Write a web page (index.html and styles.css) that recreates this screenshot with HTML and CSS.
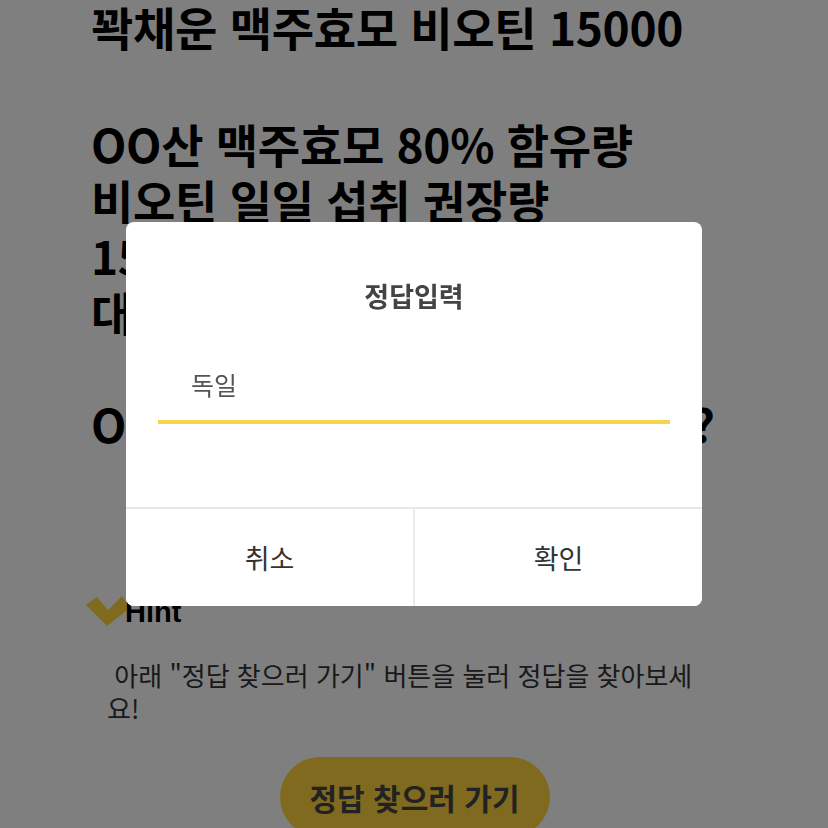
FILE: index.html
```html
<!DOCTYPE html>
<html lang="ko">
<head>
    <meta charset="UTF-8">
    <meta name="viewport" content="width=device-width, initial-scale=1.0">
    <title>퀴즈</title>
    <link rel="stylesheet" href="styles.css">
</head>
<body>
    <div class="page">
        <h1 class="question">꽉채운 맥주효모 비오틴 15000</h1>
        <p class="question detail">OO산 맥주효모 80% 함유량<br>비오틴 일일 섭취 권장량<br>15000% 함유<br>대용량 6개월분<br><br><span class="ask">OO에 들어갈 나라는 어디일까요?</span></p>

        <div class="hint">
            <svg class="hint-check" width="46" height="34" viewBox="0 0 46 34">
                <path d="M1 12 L12 4 L23 17 L37 3 L45 15 L22 33 Z" fill="#fed43e"/>
            </svg>
            <span class="hint-title">Hint</span>
        </div>
        <p class="hint-text">&nbsp;아래 "정답 찾으러 가기" 버튼을 눌러 정답을 찾아보세요!</p>

        <div class="go-wrap">
            <button class="go-btn">정답 찾으러 가기</button>
        </div>
    </div>

    <div class="overlay">
        <div class="dialog">
            <div class="dialog-body">
                <div class="dialog-title">정답입력</div>
                <div class="answer-field">
                    <input class="answer-input" type="text" value="독일">
                </div>
            </div>
            <div class="dialog-actions">
                <button class="action">취소</button>
                <button class="action">확인</button>
            </div>
        </div>
    </div>
</body>
</html>
```

FILE: styles.css
```css
body { margin: 0; background: #fff; font-family: "Noto Sans CJK KR", "Noto Sans", sans-serif; color: #000; overflow: hidden; }
.page { padding: 0 100px 0 91px; margin-top: -2px; }
.question { margin: 0; font-size: 46px; font-weight: 700; line-height: 56px; letter-spacing: -0.3px; white-space: nowrap; }
.detail { margin-top: 61px; }
.ask { letter-spacing: -1px; }

.hint { display: flex; align-items: flex-end; height: 34px; margin-top: 142px; margin-left: -6px; }
.hint-check { display: block; }
.hint-title { font-family: "Liberation Sans", sans-serif; font-weight: 700; font-size: 29px; line-height: 30px; margin-left: -6px; }
.hint-text { margin: 31px 16px 0 16px; font-size: 26px; line-height: 33px; color: #333; }

.go-wrap { display: flex; justify-content: center; margin-top: 33px; padding-left: 10px; }
.go-btn { border: 0; background: #fed43e; border-radius: 40px; width: 270px; height: 80px; font-family: inherit; font-size: 30px; font-weight: 700; color: #444; }

.overlay { position: fixed; inset: 0; background: rgba(0, 0, 0, 0.5); display: flex; align-items: center; justify-content: center; }
.dialog { width: 576px; background: #fff; border-radius: 8px; overflow: hidden; }
.dialog-body { height: 287px; padding: 0 32px; box-sizing: border-box; border-bottom: 2px solid #e8e8e8; }
.dialog-title { padding-top: 56px; text-align: center; font-size: 27px; font-weight: 700; color: #444; line-height: 36px; }
.answer-field { margin-top: 52px; border-bottom: 4px solid #f5d54a; }
.answer-input { display: block; width: 100%; box-sizing: border-box; border: 0; outline: none; padding: 0 33px 18px; font-family: inherit; font-size: 25px; color: #555; line-height: 36px; background: transparent; }
.dialog-actions { display: flex; height: 97px; }
.action { flex: 1; border: 0; background: #fff; font-family: inherit; font-size: 27px; color: #333; }
.action + .action { border-left: 2px solid #ececec; }
```
